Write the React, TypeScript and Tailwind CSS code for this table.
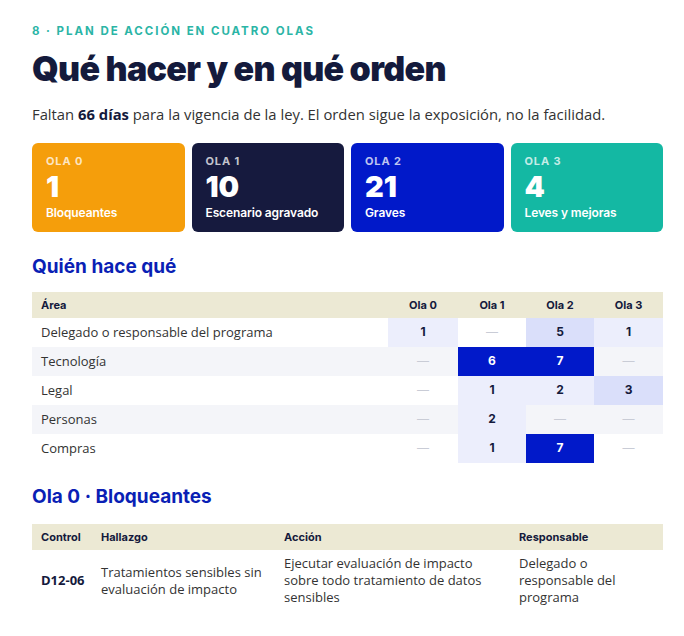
const waves = [
  { tag: 'OLA 0', n: '1', label: 'Bloqueantes', bg: 'bg-[#f59e0b]' },
  { tag: 'OLA 1', n: '10', label: 'Escenario agravado', bg: 'bg-[#161a3e]' },
  { tag: 'OLA 2', n: '21', label: 'Graves', bg: 'bg-[#0119c9]' },
  { tag: 'OLA 3', n: '4', label: 'Leves y mejoras', bg: 'bg-[#14b8a3]' },
];

type Cell = number | null;

const rows: { area: string; cells: Cell[] }[] = [
  { area: 'Delegado o responsable del programa', cells: [1, null, 5, 1] },
  { area: 'Tecnología', cells: [null, 6, 7, null] },
  { area: 'Legal', cells: [null, 1, 2, 3] },
  { area: 'Personas', cells: [null, 2, null, null] },
  { area: 'Compras', cells: [null, 1, 7, null] },
];

function cellClass(v: Cell) {
  if (v === null) return 'text-[#c9ccd6] font-normal';
  if (v >= 6) return 'bg-[#0119c9] text-white';
  if (v >= 3) return 'bg-[#dadffa] text-[#141a3c]';
  return 'bg-[#eceefc] text-[#141a3c]';
}

const head = "font-['Inter',sans-serif]";
const body = "font-['Open_Sans',sans-serif]";

export default function App() {
  return (
    <div className={`min-h-screen bg-white pl-8 pr-[21px] pt-[23px] ${body}`}>
      <p className={`${head} text-[11.5px] font-bold tracking-[0.17em] text-[#2bb5a6]`}>
        8 · PLAN DE ACCIÓN EN CUATRO OLAS
      </p>
      <h1 className={`${head} mt-[9px] text-[34px] font-black leading-[40px] tracking-[-0.02em] text-[#141a3c]`}>
        Qué hacer y en qué orden
      </h1>
      <p className="mt-[13px] text-[14.8px] leading-6 text-[#333]">
        Faltan <b className="font-bold text-[#141a3c]">66 días</b> para la vigencia de la ley. El orden sigue la exposición, no la facilidad.
      </p>

      {/* Wave summary cards */}
      <div className="mt-[17px] grid grid-cols-4 gap-[7px]">
        {waves.map((w) => (
          <div key={w.tag} className={`${w.bg} h-[89px] rounded-md px-[14px] pt-[10px] text-white ${head}`}>
            <div className="text-[11px] font-bold tracking-[0.08em] text-white/75">{w.tag}</div>
            <div className="text-[29px] font-black leading-[33px]">{w.n}</div>
            <div className="mt-[1px] text-[12px] font-semibold tracking-[-0.01em]">{w.label}</div>
          </div>
        ))}
      </div>

      <h2 className={`${head} mt-[21px] text-[19px] font-bold text-[#0a1fb5]`}>Quién hace qué</h2>

      <table className="mt-[10px] w-full border-collapse text-[13px]">
        <thead>
          <tr className={`bg-[#ece9d4] ${head} text-[11px] font-bold text-[#141a3c]`}>
            <th className="h-[26px] pl-[9px] text-left font-bold">Área</th>
            <th className="w-[70px] font-bold">Ola 0</th>
            <th className="w-[68px] font-bold">Ola 1</th>
            <th className="w-[68px] font-bold">Ola 2</th>
            <th className="w-[69px] font-bold">Ola 3</th>
          </tr>
        </thead>
        <tbody>
          {rows.map((r, i) => (
            <tr key={r.area} className={i % 2 === 1 ? 'bg-[#f4f5f9]' : 'bg-white'}>
              <td className="h-[29px] pl-[9px] text-[#333]">{r.area}</td>
              {r.cells.map((v, j) => (
                <td key={j} className={`text-center ${head} text-[12px] font-bold ${cellClass(v)}`}>
                  {v === null ? '—' : v}
                </td>
              ))}
            </tr>
          ))}
        </tbody>
      </table>

      <h2 className={`${head} mt-[20px] text-[19px] font-bold text-[#0a1fb5]`}>Ola 0 · Bloqueantes</h2>

      <table className="mt-[13px] w-full border-collapse text-[13px]">
        <thead>
          <tr className={`bg-[#ece9d4] ${head} text-[11px] font-bold text-[#141a3c]`}>
            <th className="h-[26px] w-[60px] pl-[9px] text-left font-bold">Control</th>
            <th className="w-[183px] pl-[9px] text-left font-bold">Hallazgo</th>
            <th className="w-[235px] pl-[9px] text-left font-bold">Acción</th>
            <th className="pl-[9px] text-left font-bold">Responsable</th>
          </tr>
        </thead>
        <tbody>
          <tr className="align-middle text-[#333]">
            <td className="py-[5px] pl-[9px] font-bold text-[#141a3c]">D12-06</td>
            <td className="pl-[9px] pr-2 leading-[17px]">Tratamientos sensibles sin evaluación de impacto</td>
            <td className="py-[5px] pl-[9px] pr-6 leading-[17px]">Ejecutar evaluación de impacto sobre todo tratamiento de datos sensibles</td>
            <td className="py-[5px] pl-[9px] pr-[30px] leading-[17px]">Delegado o responsable del programa</td>
          </tr>
        </tbody>
      </table>
    </div>
  );
}
